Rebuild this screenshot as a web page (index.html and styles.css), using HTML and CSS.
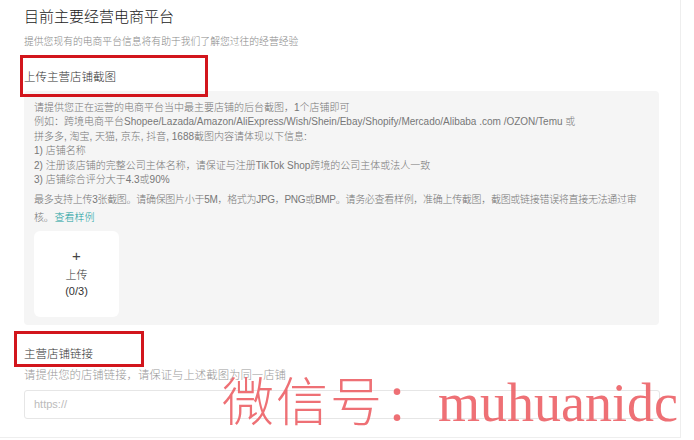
FILE: index.html
```html
<!DOCTYPE html>
<html lang="zh">
<head>
<meta charset="utf-8">
<title>目前主要经营电商平台</title>
<link rel="stylesheet" href="styles.css">
</head>
<body>
<div class="page">
  <h1 class="title">目前主要经营电商平台</h1>
  <p class="subtitle">提供您现有的电商平台信息将有助于我们了解您过往的经营经验</p>

  <div class="mark mark-one"><span class="label">上传主营店铺截图</span></div>

  <div class="panel">
    <div class="info">
      <div>请提供您正在运营的电商平台当中最主要店铺的后台截图，1个店铺即可</div>
      <div>例如：跨境电商平台Shopee/Lazada/Amazon/AliExpress/Wish/Shein/Ebay/Shopify/Mercado/Alibaba .com /OZON/Temu 或</div>
      <div>拼多多, 淘宝, 天猫, 京东, 抖音, 1688截图内容请体现以下信息:</div>
      <div>1) 店铺名称</div>
      <div>2) 注册该店铺的完整公司主体名称，请保证与注册TikTok Shop跨境的公司主体或法人一致</div>
      <div>3) 店铺综合评分大于4.3或90%</div>
    </div>
    <p class="note">最多支持上传3张截图。请确保图片小于5M，格式为JPG，PNG或BMP。请务必查看样例，准确上传截图，截图或链接错误将直接无法通过审核。<a class="link" href="#">查看样例</a></p>
    <div class="upload">
      <span class="plus">+</span>
      <span class="up-text">上传</span>
      <span class="up-count">(0/3)</span>
    </div>
  </div>

  <div class="mark mark-two"><span class="label">主营店铺链接</span></div>
  <p class="desc">请提供您的店铺链接，请保证与上述截图为同一店铺</p>
  <div class="input"><span class="placeholder">https://</span></div>

  <div class="watermark"><span class="wm-cn">微信号：</span><span class="wm-en">muhuanidc</span></div>
</div>
</body>
</html>
```

FILE: styles.css
```css
* { box-sizing: border-box; }
html, body { margin: 0; padding: 0; background: #fff; }
body {
  font-family: "Liberation Sans", "Noto Sans CJK SC", sans-serif;
  color: #333;
  font-weight: 300;
}
.page {
  position: relative;
  width: 681px;
  height: 438px;
  padding: 7px 0 0 24px;
  border-right: 1px solid #eeeeee;
  border-bottom: 1px solid #eeeeee;
  overflow: hidden;
}
.title {
  margin: 0;
  font-size: 15px;
  line-height: 20px;
  font-weight: 300;
  color: #222;
}
.subtitle {
  margin: 8px 0 0;
  font-size: 9.8px;
  line-height: 14px;
  color: #888;
}
.mark {
  position: relative;
  z-index: 1;
  display: flex;
  border: 3px solid #d2151c;
}
.label {
  font-size: 11.5px;
  color: #333;
}
.mark-one {
  margin: 6px 0 0 -4px;
  width: 188px;
  height: 42px;
  align-items: center;
  padding-left: 1px;
}
.panel {
  margin-top: -6px;
  width: 635px;
  padding: 10px 10px 8px;
  background: #f5f5f5;
  border-radius: 4px;
  font-size: 10px;
  color: #777;
}
.info { line-height: 14.4px; }
.note {
  margin: 4px 0 0;
  width: 614px;
  line-height: 17.7px;
  letter-spacing: -0.3px;
}
.link { color: #14a0a0; text-decoration: none; letter-spacing: 0; margin-left: 1px; }
.upload {
  margin-top: 4px;
  width: 85px;
  height: 86px;
  background: #fff;
  border-radius: 6px;
  display: flex;
  flex-direction: column;
  align-items: center;
  justify-content: center;
  color: #333;
  font-size: 11px;
}
.plus { font-size: 15px; line-height: 16px; font-weight: 300; color: #444; }
.up-text { line-height: 18px; margin-top: 2px; }
.up-count { line-height: 15px; }
.mark-two {
  margin: 6px 0 0 -10px;
  width: 130px;
  height: 36px;
  padding: 12px 0 2px 7px;
  line-height: 16px;
}
.desc {
  margin: 0;
  font-size: 11.4px;
  line-height: 16px;
  color: #999;
}
.input {
  margin-top: 7px;
  width: 636px;
  height: 29px;
  border: 1px solid #e6e6e6;
  border-radius: 3px;
  display: flex;
  align-items: center;
  padding-left: 9px;
}
.placeholder { font-size: 11px; color: #bbb; }
.watermark {
  position: absolute;
  left: 222px;
  top: 372px;
  white-space: nowrap;
  line-height: 54px;
  color: rgba(236, 96, 102, 0.9);
  font-weight: 400;
}
.wm-cn {
  font-family: "Noto Sans CJK SC", sans-serif;
  font-weight: 200;
  font-size: 52px;
  letter-spacing: 2px;
}
.wm-en {
  font-family: "Liberation Serif", serif;
  font-size: 54px;
}
```
